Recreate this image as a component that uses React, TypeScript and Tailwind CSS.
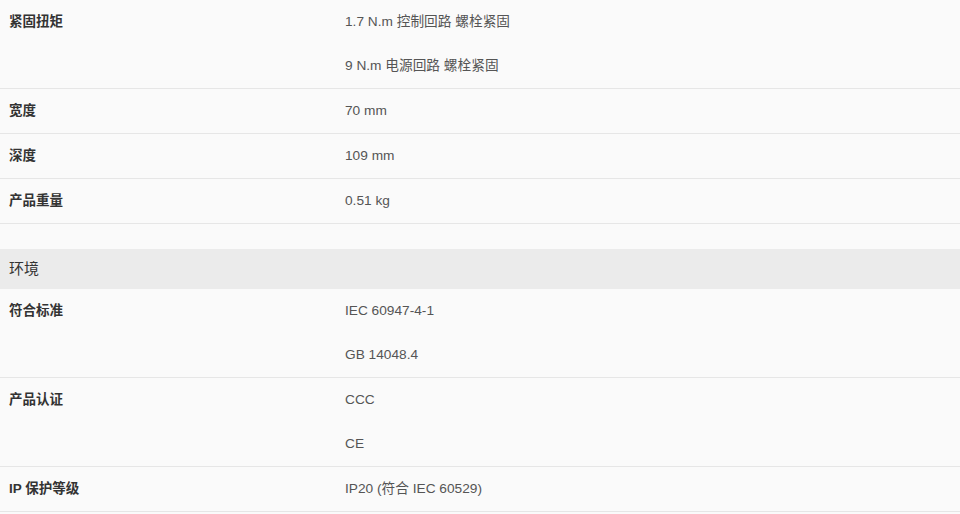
import React from "react";

type Row = { label: string; values: string[] };

const rows1: Row[] = [
  { label: "紧固扭矩", values: ["1.7 N.m 控制回路 螺栓紧固", "9 N.m 电源回路 螺栓紧固"] },
  { label: "宽度", values: ["70 mm"] },
  { label: "深度", values: ["109 mm"] },
  { label: "产品重量", values: ["0.51 kg"] },
];

const rows2: Row[] = [
  { label: "符合标准", values: ["IEC 60947-4-1", "GB 14048.4"] },
  { label: "产品认证", values: ["CCC", "CE"] },
  { label: "IP 保护等级", values: ["IP20 (符合 IEC 60529)"] },
];

function Table({ rows }: { rows: Row[] }) {
  return (
    <div>
      {rows.map((r) => (
        <div key={r.label} className="flex border-b border-[#e6e6e6]">
          <div className="w-[345px] shrink-0 pl-[9px] py-[13px] leading-[18px] text-[13.5px] font-bold text-[#333]">
            {r.label}
          </div>
          <div className="flex-1">
            {r.values.map((v) => (
              <div key={v} className="py-[13px] leading-[18px] text-[13.7px] text-[#555]">
                {v}
              </div>
            ))}
          </div>
        </div>
      ))}
    </div>
  );
}

export default function App() {
  return (
    <div
      className="w-[960px] h-[514px] overflow-hidden bg-[#fafafa]"
      style={{ fontFamily: '"Liberation Sans", Arial, "Noto Sans CJK SC", sans-serif' }}
    >
      <Table rows={rows1} />
      <div className="h-[25px]" />
      <div className="h-[40px] bg-[#ebebeb] pl-[9px] flex items-center text-[15px] text-[#333]">环境</div>
      <Table rows={rows2} />
    </div>
  );
}
